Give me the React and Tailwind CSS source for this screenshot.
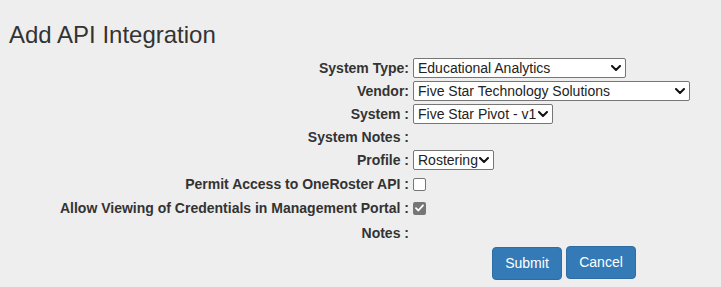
import React from "react";

const Chevron = () => (
  <svg
    className="absolute right-[4px] top-1/2 -translate-y-1/2"
    width="10"
    height="6"
    viewBox="0 0 10 6"
    fill="none"
  >
    <path d="M1 1l4 4 4-4" stroke="#111" strokeWidth="2" strokeLinecap="round" strokeLinejoin="round" />
  </svg>
);

const Select = ({ value, width }) => (
  <div
    className="relative h-[20px] bg-white border border-[#767676] rounded-[2px] text-[14px] leading-[18px] text-[#222] pl-[4px] whitespace-nowrap"
    style={{ width }}
  >
    {value}
    <Chevron />
  </div>
);

const Row = ({ label, h, children }) => (
  <div className="flex items-center" style={{ height: h }}>
    <div className="w-[409px] text-right font-bold text-[14px] text-[#333] whitespace-nowrap leading-[18px]">
      {label}
    </div>
    <div className="ml-[4px] flex items-center">{children}</div>
  </div>
);

export default function App() {
  return (
    <div
      className="w-[721px] h-[287px] bg-[#eeeeee] overflow-hidden"
      style={{ fontFamily: '"Liberation Sans", Arial, sans-serif' }}
    >
      <div className="pt-[22px] pl-[9px] text-[24px] leading-[26px] text-[#333]">
        Add API Integration
      </div>
      <div className="mt-[8px] flex flex-col">
        <Row label="System Type:" h={23}>
          <Select value="Educational Analytics" width={213} />
        </Row>
        <Row label="Vendor:" h={23}>
          <Select value="Five Star Technology Solutions" width={277} />
        </Row>
        <Row label="System :" h={23}>
          <Select value="Five Star Pivot - v1" width={140} />
        </Row>
        <Row label="System Notes :" h={23} />
        <Row label="Profile :" h={24}>
          <Select value="Rostering" width={81} />
        </Row>
        <Row label="Permit Access to OneRoster API :" h={24}>
          <span className="block w-[13px] h-[13px] bg-white border border-[#767676] rounded-[2px]" />
        </Row>
        <Row label="Allow Viewing of Credentials in Management Portal :" h={24}>
          <span className="flex items-center justify-center w-[13px] h-[13px] bg-[#767676] rounded-[2px]">
            <svg width="9" height="8" viewBox="0 0 9 8" fill="none">
              <path d="M1 4.2l2.4 2.3L8 1.3" stroke="#fff" strokeWidth="1.8" strokeLinecap="round" strokeLinejoin="round" />
            </svg>
          </span>
        </Row>
        <Row label="Notes :" h={25} />
        <div className="flex items-start ml-[492px] mt-[1px] gap-[4px]">
          <button className="w-[70px] h-[33px] bg-[#337ab7] border border-[#2e6da4] rounded-[4px] text-white text-[14px] mt-[1px]">
            Submit
          </button>
          <button className="w-[70px] h-[33px] bg-[#337ab7] border border-[#2e6da4] rounded-[4px] text-white text-[14px]">
            Cancel
          </button>
        </div>
      </div>
    </div>
  );
}
